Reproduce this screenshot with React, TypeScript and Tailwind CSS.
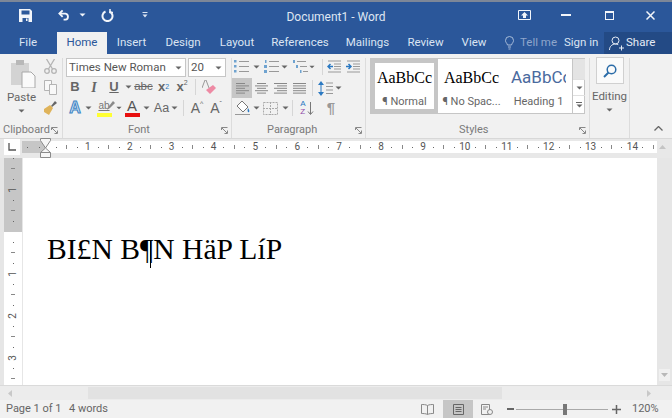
import { ReactNode } from 'react';

function Arrow({ className = 'text-[#666]' }: { className?: string }) {
    return (
        <svg width="7" height="4" viewBox="0 0 7 4" className={className}>
            <path d="M0.5 0.5h6L3.5 3.5z" fill="currentColor" />
        </svg>
    );
}

function Launcher() {
    return (
        <svg width="7" height="7" viewBox="0 0 7 7" className="text-[#888]">
            <path d="M0.5 3V0.5H6.5M1 1l5 5M6.500 3.500v3h-3" fill="none" stroke="currentColor" />
        </svg>
    );
}

function Lines({ kind }: { kind: 'left' | 'center' | 'right' | 'justify' }) {
    const rows = [
        [13, 13, 13, 13, 13],
        [9, 13, 9, 13, 9],
        [9, 13, 9, 13, 9],
        [13, 10, 13, 10, 13],
    ];
    const w = rows[['justify', 'left', 'center', 'right'].indexOf(kind)];
    return (
        <svg width="13" height="11" viewBox="0 0 13 11" className="text-[#888]">
            {w.map((len, i) => {
                const x = kind === 'center' ? (13 - len) / 2 : kind === 'right' ? 13 - len : 0;
                return <path key={i} d={`M${x} ${i * 2.4 + 0.5}h${len}`} stroke="currentColor" />;
            })}
        </svg>
    );
}

function ListIcon({ kind }: { kind: 'bullet' | 'number' | 'multi' }) {
    return (
        <svg width="15" height="13" viewBox="0 0 15 13">
            {kind === 'multi' ? (
                <>
                    <path d="M4 1.500h9M7 6.500h7M10 11.500h5" stroke="#999" />
                    <path d="M0 0h2v3H0zM3 5h2v3H3zM7 10h1.500v3H7z" fill="#6fa3d0" />
                </>
            ) : (
                <>
                    <path d="M5 1.500h10M5 6.500h10M5 11.500h10" stroke="#999" />
                    <path
                        d={kind === 'bullet' ? 'M0 0h2.500v2.500H0zM0 5h2.500v2.500H0zM0 10h2.500v2.500H0z' : 'M1 0h1.500v3H1zM0 5h3v3H0zM0 10h3v3H0z'}
                        fill="#6fa3d0"
                    />
                </>
            )}
        </svg>
    );
}

function IndentIcon({ flip }: { flip?: boolean }) {
    return (
        <svg width="15" height="13" viewBox="0 0 15 13">
            <path d="M1 1h13M7 4h7M7 6.500h7M7 9h7M1 12h13" stroke="#999" />
            <path d={flip ? 'M0 6.500h4M2.500 4l2.500 2.500L2.500 9' : 'M6 6.500H1M3.500 4L1 6.500 3.500 9'} fill="none" stroke="#2b79c2" strokeWidth="1.500" />
        </svg>
    );
}

// fixed-width slot so the ribbon buttons line up
function Slot({ w, children, className = '' }: { w: number; children: ReactNode; className?: string }) {
    return (
        <div style={{ width: w }} className={`flex shrink-0 items-center justify-center ${className}`}>
            {children}
        </div>
    );
}

function GroupLabel({ text, className = '' }: { text: string; className?: string }) {
    return <span className={`text-[11px] leading-[14px] text-[#7a7a7a] ${className}`}>{text}</span>;
}

function Tab({ label, w, active }: { label: string; w: number; active?: boolean }) {
    return (
        <div
            style={{ width: w }}
            className={`flex h-full shrink-0 items-center justify-center text-[11.500px] ${active ? 'bg-[#f1f1f1] text-[#2b579a]' : 'text-[#dbe4f2]'}`}
        >
            {label}
        </div>
    );
}

function StyleCard({ label, preview, selected }: { label: string; preview: ReactNode; selected?: boolean }) {
    return (
        <div className={`flex w-[67px] shrink-0 flex-col items-center bg-white border-[4px] ${selected ? 'border-[#c6c6c6]' : 'border-white'}`}>
            <div className="flex h-[30px] items-center">{preview}</div>
            <div className="mt-[2px] whitespace-nowrap text-[11px] leading-[14px] text-[#666]">{label}</div>
        </div>
    );
}

function HorizontalRuler() {
    const nums = [1, 2, 3, 4, 5, 6, 7, 8, 9, 10, 11, 12, 13, 14];
    return (
        <div className="relative">
            <div className="flex h-[12px] w-[635px] items-center overflow-hidden bg-white text-[10px] leading-none text-[#555]">
                <div className="flex h-full w-[23px] shrink-0 items-center justify-around bg-[#c6c6c6]">
                    <span className="h-[1px] w-[1px] bg-[#666]" />
                    <span className="h-[1px] w-[1px] bg-[#666]" />
                </div>
                <div className="flex pl-[6.200px]">
                    {nums.map((n) => (
                        <div key={n} className="grid w-[41.900px] shrink-0 grid-cols-4 place-items-center">
                            <span className="h-[1px] w-[1px] bg-[#666]" />
                            <span className="h-[4px] w-[1px] bg-[#888]" />
                            <span className="h-[1px] w-[1px] bg-[#666]" />
                            <span>{n}</span>
                        </div>
                    ))}
                    <div className="grid w-[41.900px] shrink-0 grid-cols-4 place-items-center">
                        <span className="h-[1px] w-[1px] bg-[#666]" />
                        <span className="h-[4px] w-[1px] bg-[#888]" />
                    </div>
                </div>
            </div>
            {/* indent markers sit over the ruler */}
            <svg width="11" height="20" viewBox="0 0 11 20" className="absolute left-[18px] top-[-3px]">
                <path d="M0.500 0.500h10v2L5.500 10 0.500 2.500z" fill="#f6f6f6" stroke="#8a8a8a" />
                <path d="M5.500 10l5 4.500v5h-10v-5zM0.500 14.500h10" fill="#f6f6f6" stroke="#8a8a8a" />
            </svg>
        </div>
    );
}

function VerticalRuler() {
    const mark = 'h-[1px] w-[1px] bg-[#666]';
    const tick = 'h-[1px] w-[4px] bg-[#888]';
    const unit = (n: number, key: string) => (
        <div key={key} className="grid h-[42px] shrink-0 grid-rows-4 place-items-center">
            <span className={mark} />
            <span className={tick} />
            <span className={mark} />
            <span className="-rotate-90 text-[10px] leading-none text-[#555]">{n}</span>
        </div>
    );
    return (
        <div className="ml-[4px] flex h-full w-[18px] shrink-0 flex-col overflow-hidden bg-white">
            <div className="flex h-[74px] shrink-0 flex-col overflow-hidden bg-[#c6c6c6]">
                <div className="-mt-[5px]">{unit(1, 'top')}</div>
                <div className="grid h-[37px] shrink-0 grid-rows-[10.500px_10.500px_10.500px_5.500px] place-items-center">
                    <span className={mark} />
                    <span className={tick} />
                    <span className={mark} />
                </div>
            </div>
            <div className="flex flex-col pt-[5px]">
                {[1, 2, 3].map((n) => unit(n, `n${n}`))}
                <div className="grid h-[21px] shrink-0 grid-rows-2 place-items-center">
                    <span className={mark} />
                    <span className={tick} />
                </div>
            </div>
        </div>
    );
}

export default function App() {
    return (
        <div className="flex h-[418px] w-[672px] flex-col overflow-hidden bg-[#e6e6e6] font-['Roboto']">
            <div className="h-[2px] bg-[#7d8798]" />

            {/* title bar */}
            <div className="flex h-[30px] shrink-0 items-center bg-[#2b579a] pb-[4px] text-white">
                <Slot w={14} className="ml-[18px]">
                    <svg width="13" height="13" viewBox="0 0 13 13">
                        <path d="M0 0h11l2 2v11H0z" fill="#f2f5fa" />
                        <path d="M2.500 1.500h8v4h-8z" fill="#2b579a" />
                        <path d="M3.500 9h6v4h-6z" fill="#2b579a" />
                        <path d="M7 9.500h1.500v2.500H7z" fill="#f2f5fa" />
                    </svg>
                </Slot>
                <Slot w={13} className="ml-[26px]">
                    <svg width="14" height="12" viewBox="0 0 14 12" fill="none" stroke="#f2f5fa" strokeWidth="2">
                        <path d="M5 1L1.500 4.500 5 8" />
                        <path d="M2 4.500h6a3.300 3.300 0 0 1 0 6.500H6" />
                    </svg>
                </Slot>
                <Slot w={7} className="ml-[8px]">
                    <Arrow className="text-[#f2f5fa]" />
                </Slot>
                <Slot w={14} className="ml-[14px]">
                    <svg width="13" height="13" viewBox="0 0 13 13" fill="none" stroke="#f2f5fa" strokeWidth="2">
                        <path d="M4.500 2.500a5 5 0 1 0 4 0" />
                        <path d="M9 0v3.500H12" strokeWidth="1.500" />
                    </svg>
                </Slot>
                <Slot w={7} className="ml-[27px]">
                    <svg width="6" height="6" viewBox="0 0 6 6" className="text-[#dbe4f2]">
                        <path d="M0.500 0.500h5" stroke="currentColor" />
                        <path d="M0.500 2.500h5L3 5.500z" fill="currentColor" />
                    </svg>
                </Slot>
                <div className="ml-[138px] mt-[4px] w-[100px] shrink-0 whitespace-nowrap text-center text-[12px] text-[#dfe6f2]">Document1 - Word</div>
                <Slot w={14} className="ml-[131px]">
                    <svg width="13" height="11" viewBox="0 0 13 11">
                        <path d="M0.500 0.500h12v9h-12z" fill="none" stroke="#f2f5fa" />
                        <path d="M6.500 2L10 5.500H8V8H5V5.500H3z" fill="#f2f5fa" />
                    </svg>
                </Slot>
                <Slot w={10} className="ml-[30px]">
                    <span className="h-[2px] w-[10px] bg-[#f2f5fa]" />
                </Slot>
                <Slot w={10} className="ml-[33px]">
                    <span className="h-[9px] w-[9px] border border-t-2 border-[#f2f5fa]" />
                </Slot>
                <Slot w={10} className="ml-[31px]">
                    <svg width="9" height="9" viewBox="0 0 9 9">
                        <path d="M0.500 0.500l8 8M8.500 0.500l-8 8" stroke="#f2f5fa" strokeWidth="1.500" />
                    </svg>
                </Slot>
            </div>

            {/* tabs */}
            <div className="flex h-[22px] shrink-0 items-center bg-[#2b579a]">
                <div className="ml-[19px] w-[38px] shrink-0 text-[11.500px] text-[#dbe4f2]">File</div>
                <Tab label="Home" w={50} active />
                <Tab label="Insert" w={49} />
                <Tab label="Design" w={54} />
                <Tab label="Layout" w={54} />
                <Tab label="References" w={72} />
                <Tab label="Mailings" w={63} />
                <Tab label="Review" w={53} />
                <Tab label="View" w={44} />
                <Slot w={9} className="ml-[9px]">
                    <svg width="9" height="14" viewBox="0 0 9 14" fill="none" stroke="#a9bcd9">
                        <path d="M2.500 9C2 7 .5 6.500 .5 4.500a4 4 0 0 1 8 0C8.500 6.500 7 7 6.500 9zM3 11h3M3.500 13h2" />
                    </svg>
                </Slot>
                <div className="ml-[6px] w-[38px] shrink-0 whitespace-nowrap text-[11.500px] text-[#8fa6cb]">Tell me</div>
                <div className="ml-[6px] w-[37px] shrink-0 whitespace-nowrap text-[11.500px] text-[#dbe4f2]">Sign in</div>
                <div className="ml-[3px] flex h-full flex-1 items-center bg-[#234a85] pl-[5px] text-[11.500px] text-[#e6ecf5]">
                    <svg width="15" height="15" viewBox="0 0 15 15" fill="none" stroke="#e6ecf5" className="mr-[2px]">
                        <circle cx="6.500" cy="4.500" r="3.500" />
                        <path d="M0.500 14c0-3.500 2.500-6 6-6 1 0 2 .2 2.800.7M10 12h5M12.500 9.500v5" />
                    </svg>
                    Share
                </div>
            </div>

            {/* ribbon */}
            <div className="flex h-[84px] shrink-0 bg-[#f1f1f1] pt-[4px]">
                {/* clipboard */}
                <div className="flex w-[63px] shrink-0 flex-col border-r border-[#dcdcdc] pl-[3px]">
                    <div className="flex h-[65px]">
                        <div className="flex w-[37px] shrink-0 flex-col items-center pt-[2px]">
                            <svg width="25" height="28" viewBox="0 0 25 28" className="ml-[4px]">
                                <path d="M0 3h18v22H0z" fill="#d3d3d3" />
                                <path d="M5 0h8v5H5z" fill="#b8b8b8" />
                                <path d="M11 12h9l4 4v12H11z" fill="#fafafa" stroke="#a8a8a8" />
                            </svg>
                            <span className="mt-[2px] text-[11.500px] leading-[14px] text-[#666]">Paste</span>
                            <div className="mt-[5px]">
                                <Arrow />
                            </div>
                        </div>
                        <div className="flex flex-col items-center gap-[6px] pl-[3px] pt-[1px]">
                            <svg width="13" height="15" viewBox="0 0 13 15" fill="none" stroke="#b4b4b4" strokeWidth="1.300">
                                <path d="M2.500 0l6 10M10.500 0l-6 10" />
                                <circle cx="3" cy="12" r="2.300" />
                                <circle cx="10" cy="12" r="2.300" />
                            </svg>
                            <svg width="13" height="15" viewBox="0 0 13 15" fill="#f8f8f8" stroke="#b4b4b4">
                                <path d="M0.500 0.500h7v10h-7z" />
                                <path d="M5.500 4.500h7v10h-7z" />
                            </svg>
                            <svg width="14" height="14" viewBox="0 0 14 14">
                                <path d="M8 5l4-5 2 2-5 4z" fill="#666" />
                                <path d="M1 8l6-4 3 3-4 7-5-3z" fill="#dfb35a" />
                            </svg>
                        </div>
                    </div>
                    <div className="flex items-center justify-between pr-[4px]">
                        <GroupLabel text="Clipboard" />
                        <Launcher />
                    </div>
                </div>

                {/* font */}
                <div className="flex w-[169px] shrink-0 flex-col border-r border-[#dcdcdc] pl-[3px]">
                    <div className="flex h-[19px] gap-[2px]">
                        <div className="flex w-[120px] items-center justify-between border border-[#c6c6c6] bg-white pl-[2px] pr-[3px] text-[11.500px] text-[#555]">
                            Times New Roman
                            <Arrow />
                        </div>
                        <div className="flex w-[38px] items-center justify-between border border-[#c6c6c6] bg-white pl-[2px] pr-[3px] text-[11.500px] text-[#555]">
                            20
                            <Arrow />
                        </div>
                    </div>
                    <div className="mt-[1px] flex h-[18px] items-center font-['Liberation_Sans'] text-[#666]">
                        <Slot w={18} className="text-[13px] font-bold">B</Slot>
                        <Slot w={20} className="font-['Liberation_Serif'] text-[14px] font-bold italic">I</Slot>
                        <Slot w={20} className="text-[13px] font-bold underline">U</Slot>
                        <Slot w={9}><Arrow /></Slot>
                        <Slot w={21} className="text-[11.500px] line-through">abc</Slot>
                        <Slot w={19} className="text-[13px] font-bold">
                            x<span className="text-[7px] font-normal text-[#2b79c2]">2</span>
                        </Slot>
                        <Slot w={18} className="text-[13px] font-bold">
                            x<span className="-translate-y-1 text-[7px] font-normal">2</span>
                        </Slot>
                        <div className="ml-[4px] h-[16px] w-[1px] bg-[#d6d6d6]" />
                        <Slot w={26}>
                            <svg width="14" height="15" viewBox="0 0 14 15">
                                <path d="M0 8L3 0h1l3 8" fill="none" stroke="#999" />
                                <path d="M4 10l7-5 3 3-6 6z" fill="#ee8aa4" />
                            </svg>
                        </Slot>
                    </div>
                    <div className="mt-[2px] flex h-[20px] items-center font-['Liberation_Sans'] text-[#666]">
                        <Slot w={18} className="text-[16px] font-bold text-[#cfe1f2] [-webkit-text-stroke:1px_#3c84c4]">A</Slot>
                        <Slot w={8}><Arrow /></Slot>
                        <Slot w={24}>
                            <div className="relative flex flex-col items-center leading-none">
                                <span className="text-[10px] leading-[11px] text-[#777] underline">ab</span>
                                <span className="mt-[2px] h-[4px] w-[15px] bg-[#ffff33]" />
                                <svg width="9" height="10" viewBox="0 0 9 10" className="absolute left-[9px] top-[1px]">
                                    <path d="M1 9l2-4 4-5 2 2-5 5z" fill="#8a8a8a" />
                                </svg>
                            </div>
                        </Slot>
                        <Slot w={6}><Arrow /></Slot>
                        <Slot w={20}>
                            <div className="flex flex-col items-center leading-none">
                                <span className="text-[15px] leading-[13px] text-[#555]">A</span>
                                <span className="mt-[1px] h-[4px] w-[15px] bg-[#e81010]" />
                            </div>
                        </Slot>
                        <Slot w={8}><Arrow /></Slot>
                        <Slot w={17} className="ml-[3px] text-[12.500px]">Aa</Slot>
                        <Slot w={9}><Arrow /></Slot>
                        <div className="ml-[4px] h-[16px] w-[1px] bg-[#d6d6d6]" />
                        <Slot w={18} className="ml-[4px] text-[14px]">
                            A<span className="-translate-y-1 text-[7px]">^</span>
                        </Slot>
                        <Slot w={20} className="text-[14px]">
                            A<span className="-translate-y-1 text-[7px]">ˇ</span>
                        </Slot>
                    </div>
                    <div className="mt-[5px] flex items-center pr-[3px]">
                        <GroupLabel text="Font" className="ml-[62px]" />
                        <span className="ml-auto">
                            <Launcher />
                        </span>
                    </div>
                </div>

                {/* paragraph */}
                <div className="flex w-[134px] shrink-0 flex-col border-r border-[#dcdcdc]">
                    <div className="flex h-[17px] items-center">
                        <Slot w={18}><ListIcon kind="bullet" /></Slot>
                        <Slot w={12}><Arrow /></Slot>
                        <Slot w={18}><ListIcon kind="number" /></Slot>
                        <Slot w={8}><Arrow /></Slot>
                        <Slot w={18} className="ml-[3px]"><ListIcon kind="multi" /></Slot>
                        <Slot w={6}><Arrow /></Slot>
                        <div className="ml-[7px] h-[16px] w-[1px] bg-[#d6d6d6]" />
                        <Slot w={19} className="ml-[2px]"><IndentIcon /></Slot>
                        <Slot w={19}><IndentIcon flip /></Slot>
                    </div>
                    <div className="mt-[3px] flex h-[20px] items-center">
                        <Slot w={20} className="h-[20px] bg-[#c6c6c6]"><Lines kind="left" /></Slot>
                        <Slot w={19}><Lines kind="center" /></Slot>
                        <Slot w={19}><Lines kind="right" /></Slot>
                        <Slot w={19}><Lines kind="justify" /></Slot>
                        <div className="ml-[3px] h-[16px] w-[1px] bg-[#d6d6d6]" />
                        <Slot w={18} className="ml-[3px]">
                            <svg width="15" height="15" viewBox="0 0 15 15">
                                <path d="M3 0l3 4H0zM3 15l3-4H0zM2.500 4h1v7h-1z" fill="#2b79c2" />
                                <path d="M8 2h7M8 5.500h7M8 9h7M8 12.500h7" stroke="#999" />
                            </svg>
                        </Slot>
                        <Slot w={8}><Arrow /></Slot>
                    </div>
                    <div className="flex h-[20px] items-center">
                        <Slot w={20}>
                            <svg width="15" height="15" viewBox="0 0 15 15">
                                <path d="M7 0l6 6-5 5-6-6z" fill="#fff" stroke="#777" />
                                <path d="M13 7c1 2 2 3 1 4s-2-1-1-4z" fill="#2b79c2" />
                                <path d="M0 13.500h15" stroke="#999" />
                            </svg>
                        </Slot>
                        <Slot w={8}><Arrow /></Slot>
                        <Slot w={21}>
                            <svg width="15" height="13" viewBox="0 0 15 13" fill="none" stroke="#aaa" strokeDasharray="2 1">
                                <path d="M0.500 0.500h14v12h-14zM7.500 0v13M0 6.500h15" />
                            </svg>
                        </Slot>
                        <Slot w={8}><Arrow /></Slot>
                        <div className="ml-[3px] h-[16px] w-[1px] bg-[#d6d6d6]" />
                        <Slot w={26} className="ml-[1px]">
                            <div className="flex items-center">
                                <div className="flex flex-col font-['Liberation_Sans'] text-[8px] leading-[8px]">
                                    <span className="text-[#2b79c2]">A</span>
                                    <span className="text-[#8e4aa8]">Z</span>
                                </div>
                                <svg width="7" height="15" viewBox="0 0 7 15" className="ml-[1px]">
                                    <path d="M3.500 1v12M1 10.500L3.500 13.500 6 10.500" fill="none" stroke="#777" />
                                </svg>
                            </div>
                        </Slot>
                        <Slot w={22} className="font-['Liberation_Sans'] text-[15px] font-bold text-[#999]">¶</Slot>
                    </div>
                    <div className="mt-[5px] flex items-center pr-[3px]">
                        <GroupLabel text="Paragraph" className="ml-[35px]" />
                        <span className="ml-auto">
                            <Launcher />
                        </span>
                    </div>
                </div>

                {/* styles */}
                <div className="flex w-[224px] shrink-0 flex-col border-r border-[#dcdcdc] pl-[4px]">
                    <div className="flex h-[56px] w-[215px] border border-[#c6c6c6] bg-white">
                        <StyleCard
                            selected
                            label="¶ Normal"
                            preview={<span className="font-['Liberation_Serif'] text-[16px] text-black">AaBbCc</span>}
                        />
                        <StyleCard
                            label="¶ No Spac..."
                            preview={<span className="font-['Liberation_Serif'] text-[16px] text-black">AaBbCc</span>}
                        />
                        <StyleCard
                            label="Heading 1"
                            preview={<span className="block w-[55px] overflow-hidden whitespace-nowrap text-[17px] text-[#4a6a9e]">AaBbCc</span>}
                        />
                        <div className="ml-auto flex w-[13px] shrink-0 flex-col border-l border-[#c6c6c6]">
                            <div className="flex h-[20px] items-center justify-center bg-[#e4e4e4]" />
                            <div className="flex h-[17px] items-center justify-center border-y border-[#e0e0e0]">
                                <Arrow />
                            </div>
                            <div className="flex flex-1 flex-col items-center justify-center gap-[1px]">
                                <span className="h-[1px] w-[6px] bg-[#666]" />
                                <Arrow />
                            </div>
                        </div>
                    </div>
                    <div className="mt-[9px] flex items-center pr-[3px]">
                        <GroupLabel text="Styles" className="ml-[89px]" />
                        <span className="ml-auto">
                            <Launcher />
                        </span>
                    </div>
                </div>

                {/* editing */}
                <div className="flex w-[40px] shrink-0 flex-col items-center border-r border-[#dcdcdc]">
                    <div className="-mt-[1px] flex h-[27px] w-[28px] shrink-0 items-center justify-center border border-[#d0d0d0] bg-[#fafafa]">
                        <svg width="14" height="14" viewBox="0 0 14 14" fill="none" stroke="#2b6ca8" strokeWidth="1.500">
                            <circle cx="8.500" cy="5.500" r="4.300" />
                            <path d="M5.500 8.500L1 13" strokeWidth="2" />
                        </svg>
                    </div>
                    <span className="mt-[5px] text-[11.500px] leading-[14px] text-[#666]">Editing</span>
                    <div className="mt-[5px]">
                        <Arrow />
                    </div>
                </div>
                <div className="flex flex-1 items-end justify-end pb-[7px] pr-[9px]">
                    <svg width="9" height="5" viewBox="0 0 9 5" fill="none" stroke="#666" strokeWidth="1.300">
                        <path d="M0.500 4.500l4-4 4 4" />
                    </svg>
                </div>
            </div>

            {/* ruler row */}
            <div className="relative z-10 flex h-[20px] shrink-0 items-center border-t border-[#d8d8d8] bg-[#e8e8e8] pb-[3px]">
                <div className="ml-[4px] flex h-[16px] w-[16px] shrink-0 items-center justify-center bg-white">
                    <svg width="8" height="8" viewBox="0 0 8 8">
                        <path d="M1 0v7h7" fill="none" stroke="#555" strokeWidth="1.300" />
                    </svg>
                </div>
                <div className="ml-[2px] shrink-0">
                    <HorizontalRuler />
                </div>
                <div className="flex h-[11px] w-[11px] shrink-0 items-center justify-center">
                    <svg width="7" height="4" viewBox="0 0 7 4">
                        <path d="M3.500 0L7 4H0z" fill="#c4c4c4" />
                    </svg>
                </div>
            </div>

            {/* document area */}
            <div className="flex min-h-0 flex-1">
                <VerticalRuler />
                <div className="ml-[1px] flex-1 bg-white pl-[24px] pt-[71px]">
                    <div className="font-['Liberation_Serif'] text-[29.600px] leading-[40px] text-black">
                        BI£N B
                        <span className="relative">
                            ¶
                            <span className="absolute right-[2px] top-[8px] h-[27px] w-[1px] bg-black" />
                        </span>
                        N HäP LíP
                    </div>
                </div>
                <div className="flex w-[15px] shrink-0 items-end pb-[4px] pl-[2px]">
                    <div className="flex h-[12px] w-[11px] items-center justify-center bg-[#f0f0f0]">
                        <svg width="7" height="4" viewBox="0 0 7 4">
                            <path d="M0 0h7L3.500 4z" fill="#b8b8b8" />
                        </svg>
                    </div>
                </div>
            </div>

            {/* horizontal scrollbar */}
            <div className="flex h-[15px] shrink-0 items-center border-t border-[#dadada] bg-[#ececec] pl-[4px]">
                <div className="flex h-full w-[12px] items-center justify-center">
                    <svg width="4" height="7" viewBox="0 0 4 7">
                        <path d="M4 0v7L0 3.500z" fill="#c8c8c8" />
                    </svg>
                </div>
                <div className="ml-[72px] h-[12px] w-[414px] bg-[#e2e2e2]" />
                <div className="ml-[141px] flex h-full w-[12px] items-center justify-center">
                    <svg width="4" height="7" viewBox="0 0 4 7">
                        <path d="M0 0v7l4-3.500z" fill="#c8c8c8" />
                    </svg>
                </div>
            </div>

            {/* status bar */}
            <div className="flex h-[18px] shrink-0 items-center bg-[#f1f1f1] pl-[6px] text-[11px] text-[#666]">
                <span className="w-[63px] shrink-0 whitespace-nowrap">Page 1 of 1</span>
                <span className="w-[352px] shrink-0 whitespace-nowrap">4 words</span>
                <svg width="13" height="11" viewBox="0 0 13 11" fill="none" stroke="#888" className="shrink-0">
                    <path d="M6.500 1.500C5 .5 2 .5.500.5v9c1.500 0 4.500 0 6 1 1.500-1 4.500-1 6-1v-9c-1.500 0-4.500 0-6 1zM6.500 1.500v9" />
                </svg>
                <div className="ml-[9px] flex h-full w-[30px] shrink-0 items-center justify-center bg-[#c6c6c6]">
                    <svg width="11" height="11" viewBox="0 0 11 11" fill="none" stroke="#666">
                        <path d="M0.500 0.500h10v10h-10zM2.500 3.500h6M2.500 5.500h6M2.500 7.500h6" />
                    </svg>
                </div>
                <svg width="12" height="11" viewBox="0 0 12 11" fill="none" stroke="#888" className="ml-[8px] shrink-0">
                    <path d="M0.500 0.500h8v10h-8zM2 3h5M2 5h3" />
                    <circle cx="9" cy="8" r="2.500" fill="#f1f1f1" />
                </svg>
                <div className="ml-[14px] h-[2px] w-[7px] shrink-0 bg-[#666]" />
                <div className="relative ml-[2px] flex h-[13px] w-[92px] shrink-0 items-center">
                    <div className="h-[1px] w-full bg-[#aaa]" />
                    <div className="absolute left-[47px] h-[11px] w-[4px] bg-[#777]" />
                </div>
                <svg width="9" height="9" viewBox="0 0 9 9" className="ml-[4px] shrink-0">
                    <path d="M0 4.500h9M4.500 0v9" stroke="#666" strokeWidth="1.500" />
                </svg>
                <span className="ml-[11px] whitespace-nowrap">120%</span>
            </div>
        </div>
    );
}
